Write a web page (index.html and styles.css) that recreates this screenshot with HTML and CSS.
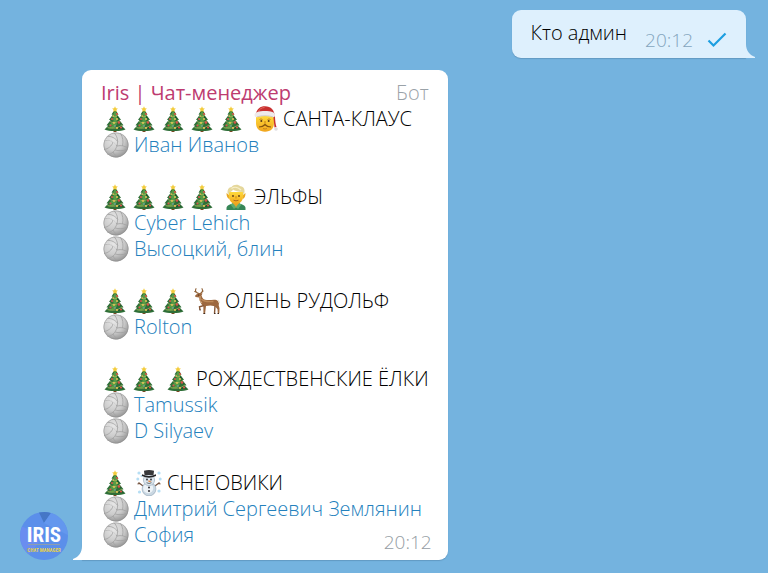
FILE: index.html
```
<!doctype html>
<html lang="ru">
<head>
<meta charset="utf-8">
<title>Iris | Чат-менеджер</title>
<link rel="stylesheet" href="styles.css">
</head>
<body>
	<!-- emoji -->
	<svg class="defs" width="0" height="0" aria-hidden="true">
		<defs>
			<radialGradient id="ballFill" cx="40%" cy="30%" r="70%">
				<stop offset="0" stop-color="#e6e6e6"/>
				<stop offset="0.6" stop-color="#cccccc"/>
				<stop offset="1" stop-color="#989898"/>
			</radialGradient>
			<linearGradient id="faceFill" x1="0" y1="0" x2="0" y2="1">
				<stop offset="0" stop-color="#ffda3a"/>
				<stop offset="1" stop-color="#f0a51d"/>
			</linearGradient>
		</defs>
		<symbol id="tree" viewBox="0 0 24 26">
			<path d="M10.500 22h3v4h-3z" fill="#7b4a26"/>
			<path d="M12 3L8.500 8.500l1.300.3-3.800 5 1.500.5-4 5 1.700.5-3.700 3.700c3 1.600 7 1.500 10.500 1.500s7.500.1 10.500-1.500l-3.700-3.700 1.700-.5-4-5 1.500-.5-3.800-5 1.300-.3z" fill="#2f6f38"/>
			<path d="M12 5l-2 3.500 2 1.500-3.500 4 2.500.5-5 4.500 4 .5-5 3 6-.5 3-4-1-2 2.500-3-1.500-2 1-2z" fill="#579b46"/>
			<path d="M14 9l2.500 4-2.500-1zM15 14l3.500 4.500-4.500-2zM16 20l5 2.500-6 .5z" fill="#1d552b"/>
			<path d="M9 10c2.500 1.300 4 1 6-.8M7 15.500c4 2 7 1 10-1M4.500 21.500c6 1.500 10.500.5 14.500-2.500" fill="none" stroke="#b9bf5b" stroke-width=".7"/>
			<path d="M12 .3l.9 2 2 .2-1.500 1.400.5 2.100-1.900-1.100L10.100 6l.5-2.100-1.500-1.400 2-.2z" fill="#f3cc3b"/>
			<g fill="#d9534b"><circle cx="14" cy="8" r="1.100"/><circle cx="9" cy="13" r="1"/><circle cx="16" cy="16.500" r="1.300"/><circle cx="7.500" cy="19.500" r="1.100"/><circle cx="18" cy="21.500" r="1.100"/></g>
			<g fill="#f0c75a"><circle cx="10.500" cy="10" r=".8"/><circle cx="14" cy="13" r=".9"/><circle cx="11" cy="17" r=".9"/><circle cx="14" cy="22" r="1"/></g>
			<circle cx="12" cy="20" r=".8" fill="#79a7c7"/>
		</symbol>
		<symbol id="ball" viewBox="0 0 26 26">
			<circle cx="13" cy="13" r="12.500" fill="url(#ballFill)"/>
			<g fill="none" stroke="#a1a1a1" stroke-width=".8">
				<path d="M14 14C9 8 5 7 1.500 9M14 14c1.500-6 0-10-3-13.400M14 14c4-1 8 0 11 2M14 14c-2 5-5 8-9.500 8.500"/>
				<path d="M4.500 4.500C8.500 4 12 6 14.800 9.500"/>
				<path d="M17.500 1.500c2.500 4 3 8 2 12.400"/>
				<path d="M12 18c4 1 8 1 11.700-.5"/>
				<path d="M10 10C9 14 5 17 1 17.500M10 20c1 2 2.500 3.500 4.500 5"/>
			</g>
			<path d="M13 13C9 8 5 7 2 8" fill="none" stroke="#eee" stroke-width=".6"/>
			<circle cx="13" cy="13" r="12.200" fill="none" stroke="#8d8d8d" stroke-width=".5"/>
		</symbol>
		<symbol id="santa" viewBox="0 0 26 26">
			<path d="M4 10v7c0 5.500 3.500 8.700 9 8.700s9-3.200 9-8.700v-7z" fill="url(#faceFill)"/>
			<path d="M4 7.500C5 3 8 .3 13 .3c6 0 9.500 4 10 10.700.2 4 .5 7 1.500 10l-2 .5C22 17 21.500 12 21 8z" fill="#c8302f"/>
			<path d="M6.500 5.500c1-2.500 3-3.800 6-4" fill="none" stroke="#e66a60"/>
			<path d="M2.500 9C2.500 6 7 5 13 5s10 1 10 4c0 2-1 2.500-3 2-5-1.300-9-1.300-14 0-2 .5-3.500 0-3.500-2z" fill="#eeeaea"/>
			<path d="M5 10.800c5-1.500 11-1.500 16 0" fill="none" stroke="#bfb8b5" stroke-width=".6"/>
			<circle cx="24" cy="23" r="1.800" fill="#dfdce1"/>
			<path d="M7.500 13.500q1.500-1.200 3 0M15.500 13.500q1.500-1.200 3 0" fill="none" stroke="#a1671c" stroke-width=".7"/>
			<g fill="#59391a"><circle cx="9.300" cy="15" r="1"/><circle cx="16.700" cy="15" r="1"/></g>
			<path d="M13 15v2.500" stroke="#cf8a16" stroke-width="1.200"/>
			<path d="M7 21c2.500 0 4.500-.7 6-2.500 1.500 1.800 3.500 2.500 6 2.500" fill="none" stroke="#875711" stroke-width="1.200"/>
			<path d="M11 22.500q2 1 4 0" fill="none" stroke="#b37418" stroke-width=".7"/>
		</symbol>
		<symbol id="elf" viewBox="0 0 26 26">
			<path d="M3.500 26v-2c0-2.500 3-3.500 6-4.500h7c3 1 6 2 6 4.500v2z" fill="#368657"/>
			<path d="M9.500 17h7v3.500L13 24l-3.500-3.500z" fill="#e5a525"/>
			<path d="M7.500 20.500l2.300-1.500 3.200 4-2 2zM18.500 20.500L16.200 19 13 23l2 2z" fill="#5cac70"/>
			<path d="M6 11L3.500 9c0 3 1 5.500 2.800 6zM20 11l2.500-2c0 3-1 5.500-2.800 6z" fill="#e8a825"/>
			<path d="M5.800 8h14.400v4c0 4-2.700 8-7.200 8s-7.200-4-7.200-8z" fill="url(#faceFill)"/>
			<path d="M5 10.500C3.500 6 6 3 8.500 3c2-3 7-3 9-.7 3.500.4 5 3.700 3.500 8.200L19.500 8C15 8 12 7 10 5.500 9.500 7 8 8 6.500 8.200z" fill="#e5d79b"/>
			<path d="M8.500 4.500C12 2 16 4 18 6" fill="none" stroke="#f7efc9" stroke-width="1.200"/>
			<g fill="#59391a"><circle cx="10" cy="12" r=".9"/><circle cx="16" cy="12" r=".9"/></g>
			<path d="M13 12v2.500" stroke="#cf8a16"/>
			<path d="M10.500 16.200q2.500 1.300 5 0" fill="none" stroke="#a4601d" stroke-width=".9"/>
		</symbol>
		<symbol id="deer" viewBox="0 0 26 26">
			<g fill="none" stroke="#8f6238" stroke-width="1.100" stroke-linecap="round">
				<path d="M5 5.500C1.500 5 1 2.500 2 .7M3 4.500L.7 3.500M6 5.500c2.500-.8 3-3 2-4.800M7.500 4.500L9 3"/>
			</g>
			<path d="M3.500 5.500L6 5l2.500.5-1 2c.8 3 2.500 4.500 5.500 4.500 4 .3 7-.8 10 .3 2 1 2.300 3 1.700 5l.8 3-.2 5h-1.500l-.3-4-2.500-3-4.500-.8-4.500.5-1 8H9.500L9.300 18C7 16.500 5.500 13 5 9.500L1.500 9 1 7.800z" fill="#9d683f"/>
			<path d="M7.500 11c2 2.500 6 3 12 2.500" fill="none" stroke="#bd8958" stroke-width="1.300"/>
			<path d="M10 17.500l-4.500 1.300L6 22M21 18l-.5 7.500" fill="none" stroke="#855636" stroke-width="1.400"/>
			<path d="M6 8v4.500l2 2.500" fill="none" stroke="#d5ab7e" stroke-width="1"/>
			<path d="M24 12l1.500 3" stroke="#eee1cf" stroke-width="1.300"/>
			<circle cx="4.700" cy="7" r=".5" fill="#25170e"/>
			<path d="M5.500 22h1.200M9.500 25.500h1.700M20 25.500h1.500M23.500 25.500H25" stroke="#3f2b20"/>
		</symbol>
		<symbol id="snowman" viewBox="0 0 26 26">
			<g fill="#b6def4"><circle cx="3" cy="3" r="1.600"/><circle cx="23" cy="3" r="1.600"/><circle cx="1.800" cy="9" r="1.500"/><circle cx="24.200" cy="9" r="1.500"/><circle cx="3.500" cy="22" r="1.600"/><circle cx="23" cy="21" r="1.600"/><circle cx="5.500" cy="6" r="1"/></g>
			<path d="M7 16L2.500 12.500M3.500 13.500l-2 .5M19 16l4.500-3.500M22.500 13.500l2 .5" stroke="#72503b" stroke-width="1.100"/>
			<circle cx="13" cy="19" r="6.900" fill="#c9d7e2" stroke="#90a5b5" stroke-width=".6"/>
			<circle cx="12.200" cy="18.200" r="5" fill="#edf3f7"/>
			<circle cx="13" cy="10" r="5.600" fill="#dde7ee" stroke="#90a5b5" stroke-width=".6"/>
			<path d="M8 .8Q13-.6 18 .8L17.500 5h-9z" fill="#38383a"/>
			<path d="M6 4.300q7 3.500 14 0v1.600q-7 3.500-14 0z" fill="#242426"/>
			<g fill="#303036"><circle cx="11" cy="9.500" r=".9"/><circle cx="15" cy="9.500" r=".9"/><circle cx="13" cy="17.500" r="1"/><circle cx="13" cy="21" r="1"/></g>
			<path d="M12.500 10.200l3.200 1.300-3.200.6z" fill="#e67b2d"/>
			<path d="M10.500 12.700q2.500 1.600 5 0" fill="none" stroke="#444" stroke-width=".7"/>
		</symbol>
	</svg>

	<main class="chat">
		<div class="msg out">
			<span class="text">Кто админ</span>
			<span class="time">20:12</span>
			<svg class="check" viewBox="0 0 20 16"><path d="M1.500 8.500l5 5L18.500 1.500" fill="none" stroke="#1c9ee0" stroke-width="2.200"/></svg>
			<svg class="tail" viewBox="0 0 9 14"><path d="M0 0c0 6 3 11 9 13v1H0z" fill="#def0fd"/></svg>
		</div>

		<div class="row">
			<svg class="avatar" viewBox="0 0 48 48" role="img" aria-label="Iris">
				<circle cx="24" cy="24" r="24" fill="#5b8fea"/>
				<path d="M24 11L19 .6A24 24 0 0 1 31 1z" fill="#4577c6"/>
				<path d="M24 11L31 1a24 24 0 0 1 17 22z" fill="#6397ee"/>
				<path d="M24 24L2 14.500A24 24 0 0 0 9 42.500z" fill="#6a8df0"/>
				<path d="M8 32.500h32" stroke="#8c9daf"/>
				<text class="logo" x="24" y="30" text-anchor="middle">IRIS</text>
				<text class="logo-sub" x="24" y="40" text-anchor="middle">CHAT MANAGER</text>
			</svg>
			<div class="msg in">
				<svg class="tail" viewBox="0 0 9 14"><path d="M9 0c0 6-3 11-9 13v1h9z" fill="#fff"/></svg>
				<div class="head"><span class="name">Iris | Чат-менеджер</span><span class="bot">Бот</span></div>

				<div class="line"><svg class="tree"><use href="#tree"/></svg><svg class="tree"><use href="#tree"/></svg><svg class="tree"><use href="#tree"/></svg><svg class="tree"><use href="#tree"/></svg><svg class="tree"><use href="#tree"/></svg><svg class="role"><use href="#santa"/></svg><span>САНТА-КЛАУС</span></div>
				<div class="line"><svg class="ball"><use href="#ball"/></svg><a href="#">Иван Иванов</a></div>

				<div class="line group"><svg class="tree"><use href="#tree"/></svg><svg class="tree"><use href="#tree"/></svg><svg class="tree"><use href="#tree"/></svg><svg class="tree"><use href="#tree"/></svg><svg class="role"><use href="#elf"/></svg><span>ЭЛЬФЫ</span></div>
				<div class="line"><svg class="ball"><use href="#ball"/></svg><a href="#">Cyber Lehich</a></div>
				<div class="line"><svg class="ball"><use href="#ball"/></svg><a href="#">Высоцкий, блин</a></div>

				<div class="line group"><svg class="tree"><use href="#tree"/></svg><svg class="tree"><use href="#tree"/></svg><svg class="tree"><use href="#tree"/></svg><svg class="role"><use href="#deer"/></svg><span>ОЛЕНЬ РУДОЛЬФ</span></div>
				<div class="line"><svg class="ball"><use href="#ball"/></svg><a href="#">Rolton</a></div>

				<div class="line group"><svg class="tree"><use href="#tree"/></svg><svg class="tree"><use href="#tree"/></svg><svg class="role"><use href="#tree"/></svg><span>РОЖДЕСТВЕНСКИЕ ЁЛКИ</span></div>
				<div class="line"><svg class="ball"><use href="#ball"/></svg><a href="#">Tamussik</a></div>
				<div class="line"><svg class="ball"><use href="#ball"/></svg><a href="#">D Silyaev</a></div>

				<div class="line group"><svg class="tree"><use href="#tree"/></svg><svg class="role"><use href="#snowman"/></svg><span>СНЕГОВИКИ</span></div>
				<div class="line"><svg class="ball"><use href="#ball"/></svg><a href="#">Дмитрий Сергеевич Землянин</a></div>
				<div class="line"><svg class="ball"><use href="#ball"/></svg><a href="#">София</a></div>
				<div class="time">20:12</div>
			</div>
		</div>
	</main>
</body>
</html>
```
FILE: styles.css
```
*{
	box-sizing: border-box;
}
body{
	margin: 0;
	background: #74b3df;
	font-family: "Open Sans", "Noto Sans", sans-serif;
	font-size: 20px;
	font-weight: 300;
	line-height: 26px;
	color: #000;
}
.defs{
	position: absolute;
}
.chat{
	display: flex;
	flex-direction: column;
	gap: 12px;
	padding: 10px 22px 13px 20px;
}
.msg{
	position: relative;
	border-radius: 9px;
	box-shadow: 0 1px 1px #6299c2;
}
.out{
	display: flex;
	align-self: flex-end;
	align-items: flex-end;
	padding: 10px 19px 5px;
	background: #def0fd;
	border-bottom-right-radius: 0;
}
.out .text{
	padding-bottom: 7px;
}
.out .time{
	margin-left: 18px;
}
.check{
	width: 20px;
	height: 16px;
	margin: 0 0 5px 14px;
}
.tail{
	position: absolute;
	bottom: 0;
	width: 9px;
	height: 14px;
}
.out .tail{
	left: 100%;
}
.in .tail{
	right: 100%;
}
.row{
	display: flex;
	align-items: flex-end;
	gap: 14px;
}
.avatar{
	flex: none;
	width: 48px;
	height: 48px;
}
.logo{
	font: 700 21px "Roboto Condensed", "Open Sans Condensed", "Liberation Sans Narrow", Roboto, sans-serif;
	fill: #fff;
}
.logo-sub{
	font: 700 5px "Roboto Condensed", "Liberation Sans Narrow", Roboto, sans-serif;
	fill: #e5cf4a;
}
.in{
	padding: 10px 19px 5px;
	background: #fff;
	border-bottom-left-radius: 0;
}
.head{
	display: flex;
	justify-content: space-between;
	font-weight: 400;
}
.name{
	color: #bd3b70;
}
.bot{
	color: #9aa2a8;
	font-weight: 300;
}
.line{
	display: flex;
	align-items: center;
	gap: 5px;
	height: 26px;
	padding-left: 2px;
	white-space: nowrap;
}
.group{
	margin-top: 26px;
}
.line svg{
	flex: none;
	width: 26px;
	height: 26px;
}
.line .tree{
	width: 24px;
}
.line .role{
	margin-left: 4px;
}
.line a{
	color: #2481bd;
	text-decoration: none;
}
.time{
	color: #959da4;
	font-size: 19px;
}
.out .time{
	color: #84a5bd;
}
.in .time{
	margin: -19px -3px 0 0;
	text-align: right;
}
```
